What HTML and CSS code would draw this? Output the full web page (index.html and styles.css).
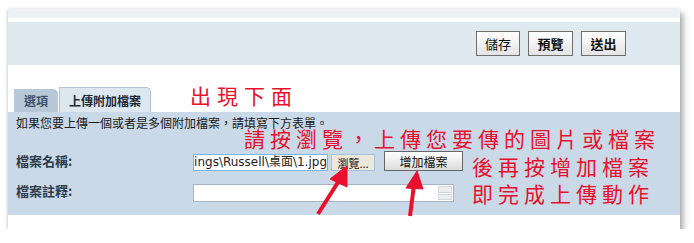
FILE: index.html
```html
<!DOCTYPE html>
<html lang="zh-TW">
<head>
    <meta charset="UTF-8">
    <title>上傳附加檔案</title>
    <link rel="stylesheet" href="styles.css">
</head>
<body>
    <div class="panel">
        <div class="top-strip"></div>
        <div class="toolbar">
            <button class="tool-btn">儲存</button>
            <button class="tool-btn strong">預覽</button>
            <button class="tool-btn strong">送出</button>
        </div>
        <div class="gap"></div>
        <div class="tabs">
            <div class="tab">選項</div>
            <div class="tab active">上傳附加檔案</div>
        </div>
        <div class="content">
            <p class="intro">如果您要上傳一個或者是多個附加檔案，請填寫下方表單。</p>
            <div class="row">
                <label class="label">檔案名稱:</label>
                <div class="file-field"><span>C:\Documents and Settings\Russell\桌面\1.jpg</span></div>
                <button class="browse-btn">瀏覽...</button>
                <button class="add-btn">增加檔案</button>
            </div>
            <div class="row second">
                <label class="label">檔案註釋:</label>
                <div class="note-field">
                    <div class="scroll">
                        <span class="arrow up"></span>
                        <span class="arrow down"></span>
                    </div>
                </div>
            </div>
        </div>
        <div class="foot"></div>

        <!-- 紅色註解 -->
        <div class="note note-1">出現下面</div>
        <div class="note note-2">請按瀏覽，上傳您要傳的圖片或檔案</div>
        <div class="note note-3">後再按增加檔案<br>即完成上傳動作</div>
        <svg class="arrows" width="672" height="230" viewBox="0 0 672 230">
            <g fill="#e8102c" stroke="#e8102c">
                <line x1="310" y1="205" x2="332" y2="170" stroke-width="4"/>
                <polygon points="339,157 339,178 322,170" stroke-width="1"/>
                <line x1="402" y1="207" x2="406" y2="176" stroke-width="4"/>
                <polygon points="409,162 415,180 398,179" stroke-width="1"/>
            </g>
        </svg>
    </div>
</body>
</html>
```

FILE: styles.css
```css
body {
    margin: 0;
    padding: 9px 14px 0 8px;
    background-color: #ffffff;
    font-family: "Noto Sans CJK TC", "DejaVu Sans", sans-serif;
    color: #222222;
}
.panel {
    position: relative;
    width: 672px;
    background-color: #ffffff;
    box-shadow: 3px 4px 6px rgba(0, 0, 0, 0.35), -1px 0 3px rgba(0, 0, 0, 0.12);
}
.top-strip { height: 9px; background-color: #edf2f5; border-bottom: 4px solid #ffffff; }
.toolbar {
    height: 43px;
    background-color: #dfe9f0;
    display: flex;
    justify-content: flex-end;
    align-items: center;
    gap: 8px;
    padding-right: 54px;
}
.tool-btn {
    height: 25px;
    width: 44px;
    padding: 0;
    border: 1px solid #6f6f6f;
    background: linear-gradient(#ffffff, #e4e4e4);
    font-family: "Noto Sans CJK TC", sans-serif;
    font-size: 13px;
    color: #111111;
}
.tool-btn.strong { font-weight: bold; width: 45px; }
.gap { height: 22px; }
.tabs { display: flex; align-items: flex-end; height: 25px; padding-left: 6px; gap: 1px; }
.tab {
    height: 23px;
    width: 44px;
    background-color: #b7c9d9;
    color: #3c5068;
    font-size: 12px;
    font-weight: bold;
    display: flex;
    align-items: center;
    justify-content: center;
    border-radius: 0 5px 0 0;
}
.tab.active {
    height: 25px;
    width: 92px;
    background-color: #dde7f0;
    color: #1d2a38;
    border: 1px solid #b2c3d3;
    border-bottom: none;
    box-sizing: border-box;
}
.content { background-color: #c9d9e8; padding: 3px 8px 13px 8px; }
.intro { margin: 0 0 23px 0; font-size: 12px; line-height: 16px; color: #1a1a1a; }
.row { display: flex; align-items: flex-start; height: 17px; }
.row.second { margin-top: 13px; height: 18px; }
.label { width: 177px; font-size: 13px; font-weight: bold; color: #2d3b4b; line-height: 14px; }
.file-field {
    width: 135px;
    height: 17px;
    box-sizing: border-box;
    border: 1px solid #7db2e4;
    background-color: #ffffff;
    display: flex;
    justify-content: flex-end;
    overflow: hidden;
    white-space: nowrap;
    font-family: "DejaVu Sans", "Noto Sans CJK TC", sans-serif;
    font-size: 12px;
    line-height: 15px;
    color: #222222;
}
.browse-btn {
    margin-left: 3px;
    width: 44px;
    height: 17px;
    padding: 0;
    border: 1px solid #a8bfd4;
    background-color: #ece8dc;
    font-family: "Noto Sans CJK TC", sans-serif;
    font-size: 11px;
    line-height: 14px;
    color: #111111;
}
.add-btn {
    margin-left: 9px;
    margin-top: -3px;
    width: 79px;
    height: 20px;
    padding: 0;
    border: 1px solid #666666;
    background: linear-gradient(#ffffff, #dcdcdc);
    font-family: "Noto Sans CJK TC", sans-serif;
    font-size: 12px;
    color: #111111;
}
.note-field {
    width: 261px;
    height: 18px;
    box-sizing: border-box;
    border: 1px solid #a8b4c0;
    background-color: #ffffff;
    display: flex;
    justify-content: flex-end;
}
.scroll { width: 14px; display: flex; flex-direction: column; gap: 1px; padding: 1px; }
.arrow { flex: 1; background-color: #eceef0; border: 1px solid #d4d8dc; }
.foot { height: 14px; }
.note {
    position: absolute;
    color: #e8102c;
    font-family: "Noto Sans CJK TC", serif;
    font-size: 21px;
    line-height: 27px;
    letter-spacing: 4px;
    white-space: nowrap;
}
.note-1 { left: 182px; top: 73px; letter-spacing: 6px; }
.note-2 { left: 236px; top: 116px; letter-spacing: 5px; }
.note-3 { left: 464px; top: 144px; letter-spacing: 5px; }
.arrows { position: absolute; left: 0; top: 0; pointer-events: none; }
```
